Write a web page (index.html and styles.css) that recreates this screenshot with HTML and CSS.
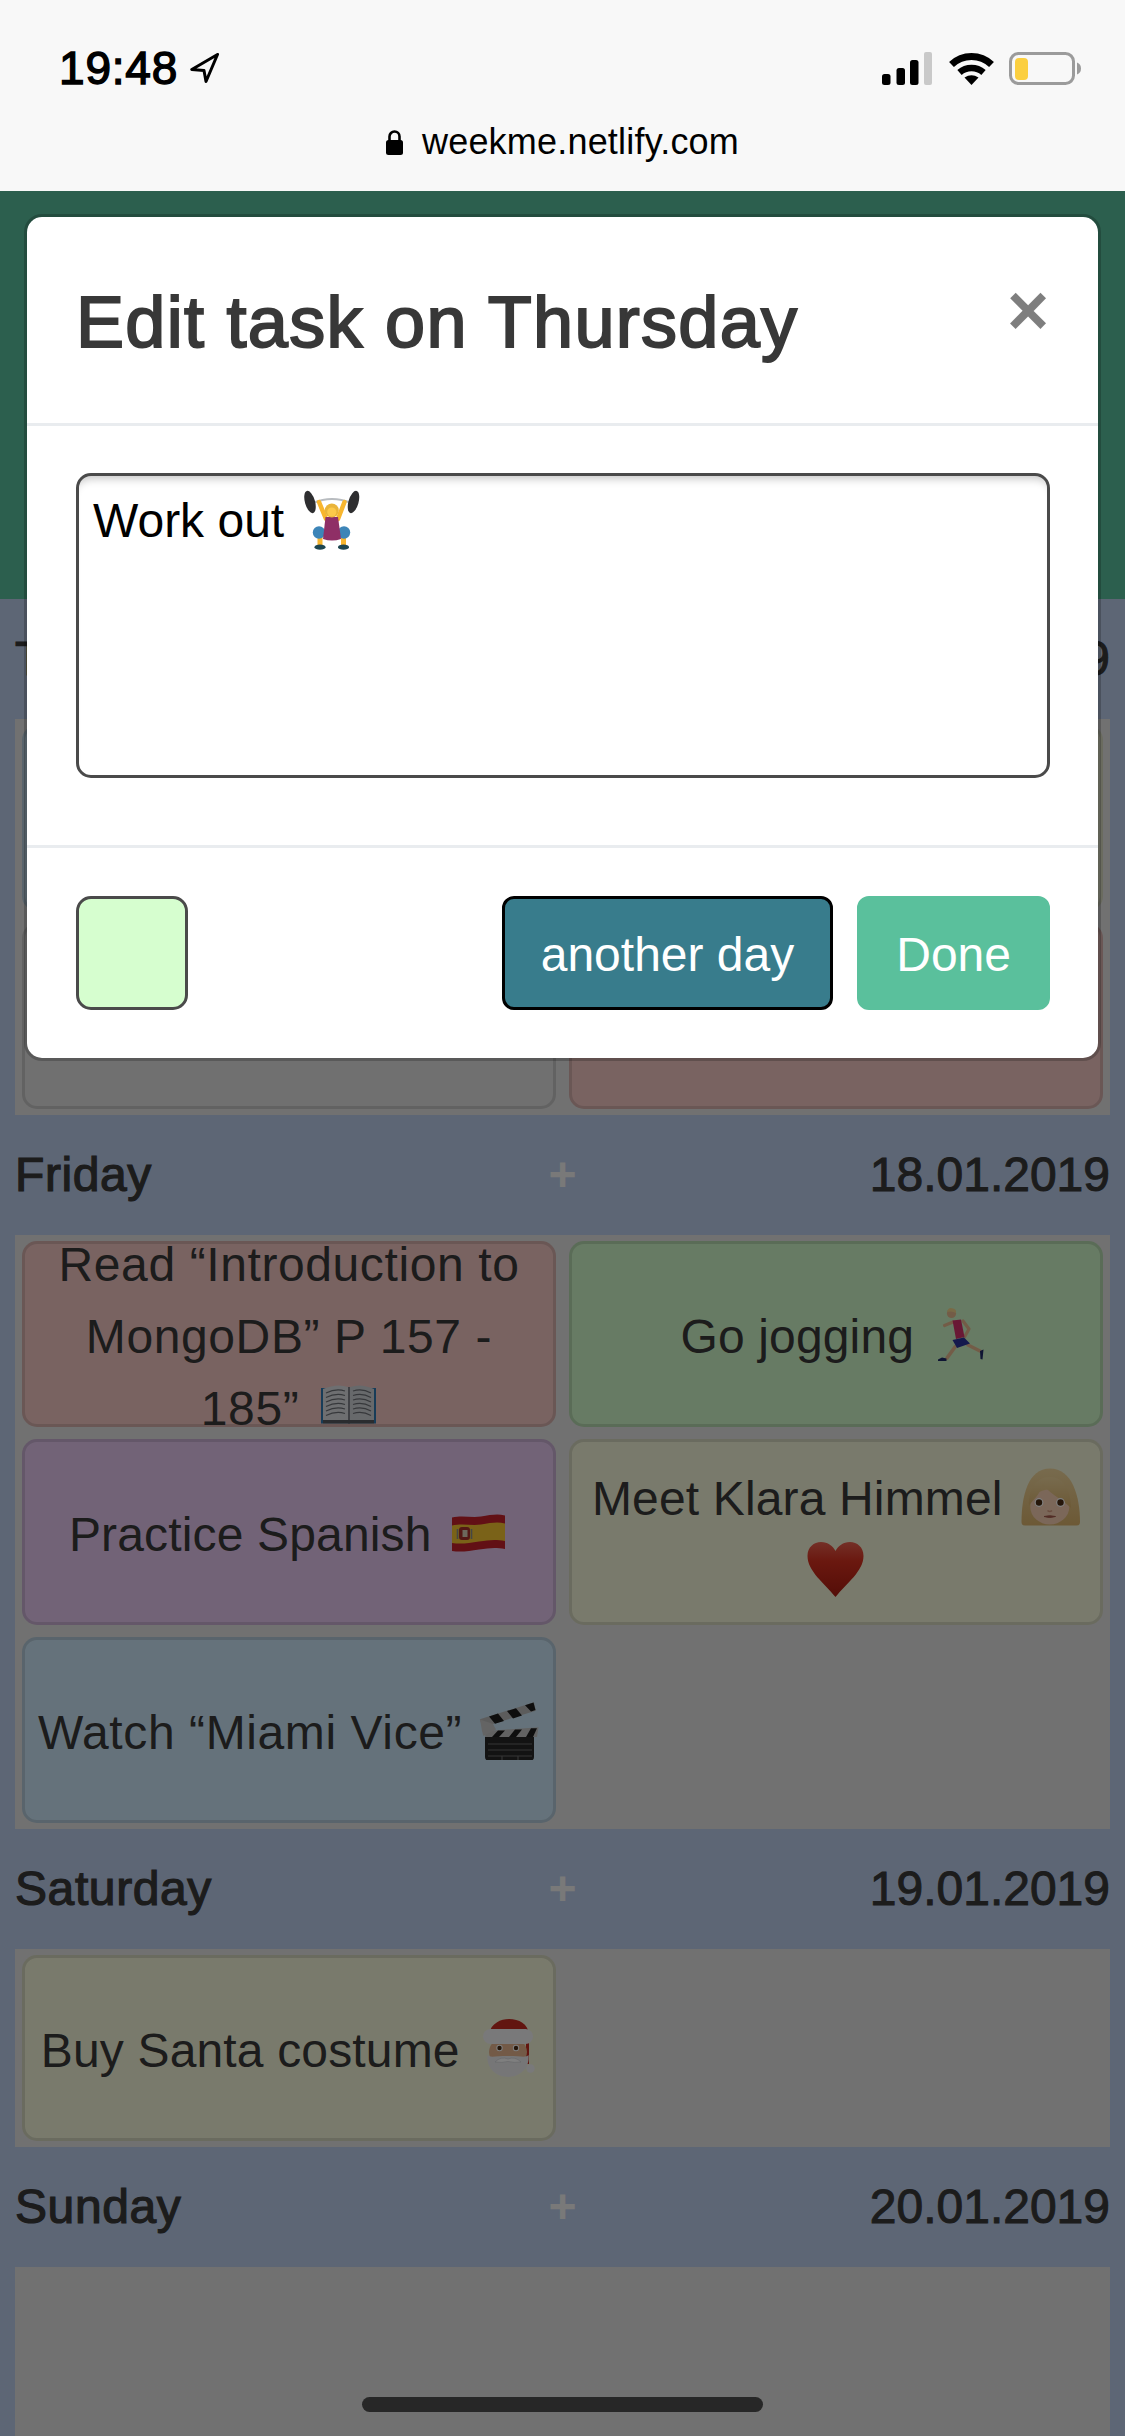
FILE: index.html
```html
<!DOCTYPE html>
<html lang="en">
<head>
  <meta charset="UTF-8">
  <meta name="viewport" content="width=device-width, initial-scale=1.0">
  <title>WeekMe</title>
  <link rel="stylesheet" href="styles.css">
</head>
<body>
  <!-- Emoji set, drawn once and reused below -->
  <svg class="sprite" aria-hidden="true">
    <defs>
      <linearGradient id="heart-fill" x1="0" y1="0" x2="0" y2="1">
        <stop offset="0" stop-color="#e8604f"/>
        <stop offset=".35" stop-color="#d5301f"/>
        <stop offset="1" stop-color="#a81b10"/>
      </linearGradient>
      <linearGradient id="hair-fill" x1="0" y1="0" x2="0" y2="1">
        <stop offset="0" stop-color="#f0d69c"/>
        <stop offset="1" stop-color="#d9b26c"/>
      </linearGradient>
    </defs>
    <symbol id="e-lifter" viewBox="0 0 64 60">
      <path d="M15 13Q34 5 53 13" fill="none" stroke="#b8bcc0" stroke-width="2"/>
      <ellipse cx="12" cy="12" rx="5" ry="11.5" transform="rotate(-16 12 12)" fill="#2e2e30"/>
      <ellipse cx="55.5" cy="12" rx="5" ry="11.5" transform="rotate(16 55.5 12)" fill="#2e2e30"/>
      <path d="M21 12L28 29M46.5 12L40 29" stroke="#f8b62e" stroke-width="4.5" stroke-linecap="round"/>
      <path d="M22 46V55M45.5 46V55" stroke="#f8b62e" stroke-width="5"/>
      <circle cx="21" cy="42.5" r="6.2" fill="#3d85b8"/>
      <circle cx="46" cy="42.5" r="6.2" fill="#3d85b8"/>
      <path d="M27.5 27H40L43 49Q34 52 25 49Z" fill="#8f2f66"/>
      <circle cx="33.8" cy="20.5" r="7" fill="#e9b43a"/>
      <circle cx="33.8" cy="22" r="4.6" fill="#fcc94a"/>
      <ellipse cx="22" cy="57.2" rx="5.5" ry="2.6" fill="#1e4650"/>
      <ellipse cx="45.5" cy="57.2" rx="5.5" ry="2.6" fill="#1e4650"/>
    </symbol>
    <symbol id="e-book" viewBox="0 0 64 60">
      <path d="M8 12H63V47.5H8Z" fill="#2f78b0"/>
      <path d="M10 13Q24 7 35 11V47.5H10Z" fill="#dcdee2"/>
      <path d="M37 11Q48 7 61 13V47.5H37Z" fill="#cfd2d6"/>
      <path d="M35 11H37V47.5H35Z" fill="#80838a"/>
      <path d="M10 44H61V47.5H10Z" fill="#55585e"/>
      <path d="M13 17Q23 12 32 15M13 21.5Q23 16.5 32 19.5M13 26Q23 21 32 24M13 30.5Q23 25.5 32 28.5M13 35Q23 30 32 33M13 39.5Q23 34.5 32 37.5M40 15Q49 12 58 17M40 19.5Q49 16.5 58 21.5M40 24Q49 21 58 26M40 28.5Q49 25.5 58 30.5M40 33Q49 30 58 35M40 37.5Q49 34.5 58 39.5" fill="none" stroke="#6d7076" stroke-width="1.2"/>
    </symbol>
    <symbol id="e-runner" viewBox="0 0 64 60">
      <path d="M25 18L16.5 21.5M35 17L41 25L36.5 33" fill="none" stroke="#e6b98e" stroke-width="3.2" stroke-linecap="round" stroke-linejoin="round"/>
      <path d="M40 41L52 47M27 43L19 54" stroke="#e6b98e" stroke-width="3.6" stroke-linecap="round"/>
      <path d="M24.5 16.5L33 15.5L36.5 33L28 35Z" fill="#d3306a"/>
      <path d="M24.5 36L36 33.5L42 39.5L29 44Z" fill="#28329a"/>
      <path d="M10 55.5L14 53.5L18.5 54.5V57H10ZM52 47L55.5 45.5L54.5 55.5L52.5 55Z" fill="#1e2a66"/>
      <circle cx="23.5" cy="9.5" r="4.6" fill="#e6b98e"/>
      <path d="M19 8Q20 3.5 24 4.2Q28.5 4.5 28 9Q24 6.5 19 8Z" fill="#f2d58c"/>
    </symbol>
    <symbol id="e-flag" viewBox="0 0 64 60">
      <path d="M7 15.5C18 13 26 16 36 14.5S52 11.5 60 13.5V47C50 45 44 46 34 47.5S16 50.5 7 49Z" fill="#c4202a"/>
      <path d="M7 23.5C18 21 26 24 36 22.5S52 19.5 60 21.5V39C50 37 44 38 34 39.5S16 42.5 7 41Z" fill="#f4c430"/>
      <rect x="14" y="25" width="11" height="13" rx="3" fill="#a6302a"/>
      <rect x="17.5" y="28" width="5" height="7" fill="#d8d0b8"/>
      <path d="M12.5 27V37M26.5 27V37" stroke="#8a8f88" stroke-width="1.6"/>
    </symbol>
    <symbol id="e-woman" viewBox="0 0 64 60">
      <path d="M5.5 56C5.5 30 12 2.5 34 2.5S64 30 64 56Q64 59.5 60.5 59.5H9Q5.5 59.5 5.5 56Z" fill="url(#hair-fill)"/>
      <ellipse cx="33.8" cy="41" rx="19.5" ry="17.5" fill="#f6cfb2"/>
      <path d="M13 40C16 34 24 30 27 17C32 28 44 31 55 42C55 24 47 11 34 11C20 11 12 24 13 40Z" fill="url(#hair-fill)"/>
      <circle cx="23" cy="36.5" r="4.4" fill="#fff"/>
      <circle cx="44.5" cy="36.5" r="4.4" fill="#fff"/>
      <circle cx="23" cy="36.5" r="3.2" fill="#4a2c14"/>
      <circle cx="44.5" cy="36.5" r="3.2" fill="#4a2c14"/>
      <path d="M31.5 44.5Q33.8 46.5 36 44.5" fill="none" stroke="#d59b80" stroke-width="1.6"/>
      <path d="M28 50.5Q33.8 52.5 39.5 50.5Q33.8 49 28 50.5Z" fill="#a55a4c" stroke="#a55a4c"/>
    </symbol>
    <symbol id="e-heart" viewBox="0 0 64 60">
      <path d="M31.5 59C20 45 3.5 33 3.5 18C3.5 9 10 4 17 4C24 4 29 8 31.5 13C34 8 39 4 46 4C53 4 59.5 9 59.5 18C59.5 33 43 45 31.5 59Z" fill="url(#heart-fill)"/>
    </symbol>
    <symbol id="e-clapper" viewBox="0 0 64 60">
      <path d="M3.8 19.3L58 2.3L59.8 10.7L6.5 27.3Z" fill="#b9b9b9"/>
      <path d="M13 16.5L22 13.6L28 21L19 23.8ZM31 11L40 8.2L46 15.6L37 18.4ZM49 5.2L57.5 2.5L59.5 10L55 11.5Z" fill="#1c1c1c"/>
      <path d="M9 37H58V57Q58 60.7 54 60.7H13Q9 60.7 9 57Z" fill="#262626"/>
      <path d="M9 37L10 31L62.5 27.3L61 37Z" fill="#c4c4c4"/>
      <path d="M16 37L22 30.6H29L23 37ZM33 37L39 29.5H46L40 37ZM50 37L55 28.3H61L57 37Z" fill="#1c1c1c"/>
      <path d="M4 19.5L17 24L20 29.5L7.5 36L6 31Z" fill="#c8c8c8"/>
      <path d="M12 44H56M12 50H56M12 56H56M26 56V60M42 56V60" stroke="#6a6a6a" stroke-width="1.2"/>
    </symbol>
    <symbol id="e-santa" viewBox="0 0 64 60">
      <path d="M16 16C18 5 28 1 36 1C46 1 55 6 56 16V46H53V24H16Z" fill="#c42a20"/>
      <ellipse cx="35" cy="34" rx="19" ry="16" fill="#e6b48e"/>
      <path d="M14.5 37C17 40 22 38 35 38S53 40 55.5 37C57 50 47 59 35 59S13 50 14.5 37Z" fill="#ecedef"/>
      <path d="M22 44Q28 38 35 41Q42 38 48 44Q41 45 35 43.5Q29 45 22 44Z" fill="#fff" stroke="#c9cbd0" stroke-width=".6"/>
      <rect x="10" y="11" width="50" height="15" rx="7.5" fill="#f2f2f4"/>
      <circle cx="26.5" cy="30" r="3.2" fill="#fff"/>
      <circle cx="43" cy="30" r="3.2" fill="#fff"/>
      <circle cx="26.5" cy="30" r="2.2" fill="#4a2c14"/>
      <circle cx="43" cy="30" r="2.2" fill="#4a2c14"/>
      <circle cx="57.5" cy="50.5" r="4.2" fill="#f2f2f4"/>
    </symbol>
  </svg>

  <div class="browser-bar">
    <div class="status-row">
      <div class="clock">
        <span>19:48</span>
        <svg class="location-icon" viewBox="0 0 29 30"><path d="M27.5 1.5L1.8 16.5L14 17.5L16 28.5Z" fill="none" stroke="#000" stroke-width="3" stroke-linejoin="round"/></svg>
      </div>
      <div class="status-icons">
        <svg class="signal-icon" viewBox="0 0 50 33">
          <rect x="0" y="22" width="8.5" height="11" rx="2.5"/>
          <rect x="14.5" y="16" width="8.5" height="17" rx="2.5"/>
          <rect x="28" y="8" width="8.5" height="25" rx="2.5"/>
          <rect x="42" y="0" width="8" height="33" rx="2" fill="#c9c9c9"/>
        </svg>
        <svg class="wifi-icon" viewBox="0 0 47 33">
          <path d="M3.5 12.5A29 29 0 0 1 43.5 12.5" fill="none" stroke="#000" stroke-width="7"/>
          <path d="M11.5 20.5A18 18 0 0 1 35.5 20.5" fill="none" stroke="#000" stroke-width="6.5"/>
          <path d="M23.5 33L16.5 25.5Q23.5 21 30.5 25.5Z"/>
        </svg>
        <svg class="battery-icon" viewBox="0 0 72 33">
          <rect x="1.5" y="1.5" width="63" height="30" rx="8" fill="none" stroke="#9b9b9b" stroke-width="3"/>
          <rect x="6" y="6" width="13" height="22" rx="4" fill="#fbcf40"/>
          <path d="M68 10.5Q72 12 72 16.5T68 22.5Z" fill="#9b9b9b"/>
        </svg>
      </div>
    </div>
    <div class="url-row">
      <svg class="lock-icon" viewBox="0 0 17 25">
        <path d="M3.5 11V6.5a5 5 0 0 1 10 0V11" fill="none" stroke="#000" stroke-width="2.6"/>
        <rect x="0" y="10" width="17" height="15" rx="2.5"/>
      </svg>
      <span>weekme.netlify.com</span>
    </div>
  </div>

  <div class="hero"></div>

  <div class="day-head">
    <span class="day-name">Thursday</span><span class="day-add">+</span><span class="day-date">17.01.2019</span>
  </div>
  <div class="day-tasks">
    <div class="task task-blue"></div>
    <div class="task task-yellow"></div>
    <div class="task task-gray"></div>
    <div class="task task-red"></div>
  </div>

  <div class="day-head">
    <span class="day-name">Friday</span><span class="day-add">+</span><span class="day-date">18.01.2019</span>
  </div>
  <div class="day-tasks">
    <div class="task task-red task-quoted"><p>Read “Introduction to MongoDB” P 157 - 185” <svg class="emoji"><use href="#e-book"/></svg></p></div>
    <div class="task task-green"><p>Go jogging <svg class="emoji"><use href="#e-runner"/></svg></p></div>
    <div class="task task-purple"><p>Practice Spanish <svg class="emoji"><use href="#e-flag"/></svg></p></div>
    <div class="task task-yellow"><p>Meet Klara Himmel <svg class="emoji"><use href="#e-woman"/></svg> <svg class="emoji"><use href="#e-heart"/></svg></p></div>
    <div class="task task-blue task-quoted"><p>Watch “Miami Vice” <svg class="emoji"><use href="#e-clapper"/></svg></p></div>
  </div>

  <div class="day-head">
    <span class="day-name">Saturday</span><span class="day-add">+</span><span class="day-date">19.01.2019</span>
  </div>
  <div class="day-tasks">
    <div class="task task-yellow"><p>Buy Santa costume <svg class="emoji"><use href="#e-santa"/></svg></p></div>
  </div>

  <div class="day-head">
    <span class="day-name">Sunday</span><span class="day-add">+</span><span class="day-date">20.01.2019</span>
  </div>
  <div class="day-tasks day-last"></div>

  <div class="backdrop"></div>

  <div class="modal">
    <div class="modal-header">
      <h5 class="modal-title">Edit task on Thursday</h5>
      <span class="modal-close">×</span>
    </div>
    <div class="modal-body">
      <div class="task-input">Work out <svg class="emoji"><use href="#e-lifter"/></svg></div>
    </div>
    <div class="modal-footer">
      <div class="color-swatch"></div>
      <button class="btn btn-day">another day</button>
      <button class="btn btn-done">Done</button>
    </div>
  </div>

  <div class="home-bar"></div>
</body>
</html>
```

FILE: styles.css
```css
/* Reset */
* {
  margin: 0;
  padding: 0;
  box-sizing: border-box;
}

html, body {
  width: 1125px;
  height: 2436px;
  overflow: hidden;
}

body {
  position: relative;
  display: flex;
  flex-direction: column;
  font-family: "Liberation Sans", Arial, sans-serif;
  font-size: 48px;
  line-height: 72px;
  color: #383838;
  background-color: #bacceb;
}

.sprite {
  position: absolute;
  width: 0;
  height: 0;
}

.emoji {
  width: 64px;
  height: 60px;
  vertical-align: -13px;
  overflow: visible;
}

/* Safari bar */
.browser-bar {
  height: 191px;
  flex-shrink: 0;
  background-color: #f8f8f8;
  color: #000;
  padding-top: 44px;
}

.status-row {
  display: flex;
  justify-content: space-between;
  align-items: center;
  height: 48px;
  padding: 0 44px 0 59px;
}

.clock {
  display: flex;
  align-items: center;
  gap: 12px;
  font-size: 46px;
  -webkit-text-stroke: 1.4px #000;
  letter-spacing: 0.8px;
}

.location-icon {
  width: 29px;
  height: 30px;
}

.status-icons {
  display: flex;
  align-items: center;
  gap: 16px;
}

.signal-icon {
  width: 50px;
  height: 33px;
}

.wifi-icon {
  width: 47px;
  height: 33px;
  margin-right: -2px;
}

.battery-icon {
  width: 72px;
  height: 33px;
}

.url-row {
  display: flex;
  justify-content: center;
  align-items: center;
  gap: 19px;
  margin-top: 26px;
  font-size: 36px;
  line-height: 48px;
  letter-spacing: 0.2px;
}

.lock-icon {
  width: 17px;
  height: 25px;
}

/* Page under the dialog */
.hero {
  height: 408px;
  flex-shrink: 0;
  background-color: #58bf9c;
}

.day-head {
  display: grid;
  grid-template-columns: 1fr auto 1fr;
  align-items: center;
  height: 120px;
  flex-shrink: 0;
  padding: 0 15px;
}

.day-name {
  -webkit-text-stroke: 1.2px #383838;
  letter-spacing: 0.6px;
}

.day-add {
  font-weight: bold;
  color: #f2f2f2;
}

.day-date {
  text-align: right;
  -webkit-text-stroke: 1px #383838;
}

.day-tasks {
  display: grid;
  grid-template-columns: 1fr 1fr;
  grid-auto-rows: 186px;
  gap: 12px 13px;
  flex-shrink: 0;
  margin: 0 15px;
  padding: 6px 7px;
  background-color: #e2e2e2;
}

.day-last {
  flex: 1;
}

.task {
  display: flex;
  align-items: center;
  justify-content: center;
  padding: 6px 10px 0;
  text-align: center;
  letter-spacing: 0.15px;
  border: 3px solid rgba(0, 0, 0, 0.12);
  border-radius: 15px;
}

.task .emoji {
  vertical-align: -11px;
}

/* Apple's curly quotes run wider than Liberation's */
.task-quoted {
  letter-spacing: 0.6px;
}

.task-red { background-color: #f2c6c3; }
.task-green { background-color: #cff6c8; }
.task-purple { background-color: #e4c7ef; }
.task-yellow { background-color: #f3f5d9; }
.task-blue { background-color: #cbe5f6; }
.task-gray { background-color: #e0e0e0; }

.backdrop {
  position: absolute;
  top: 191px;
  left: 0;
  right: 0;
  bottom: 0;
  background-color: rgba(0, 0, 0, 0.5);
}

/* Dialog */
.modal {
  position: absolute;
  top: 214px;
  left: 24px;
  width: 1077px;
  background-color: #fff;
  background-clip: padding-box;
  border: 3px solid rgba(0, 0, 0, 0.2);
  border-radius: 18px;
}

.modal-header {
  display: flex;
  justify-content: space-between;
  align-items: flex-start;
  padding: 51px 48px 47px 49px;
  border-bottom: 3px solid #e9ecef;
}

.modal-title {
  font-size: 72px;
  font-weight: normal;
  line-height: 108px;
  color: #383838;
  -webkit-text-stroke: 2px #383838;
  letter-spacing: 1.3px;
}

.modal-close {
  font-size: 72px;
  font-weight: bold;
  line-height: 72px;
  color: #000;
  opacity: 0.5;
  margin: 6px 1px 0 0;
}

.modal-body {
  padding: 47px 48px 67px 49px;
}

.task-input {
  height: 305px;
  padding: 9px 14px;
  color: #000;
  background-color: #fff;
  border: 3px solid #4a4a4a;
  border-radius: 15px;
  box-shadow: inset 0 10px 9px -7px rgba(0, 0, 0, 0.22);
}

.modal-footer {
  display: flex;
  align-items: center;
  gap: 24px;
  padding: 48px 48px 48px 49px;
  border-top: 3px solid #e9ecef;
}

.color-swatch {
  width: 112px;
  height: 114px;
  margin-right: auto;
  background-color: #d6fecf;
  border: 3px solid #4a4a4a;
  border-radius: 15px;
}

.btn {
  height: 114px;
  padding: 3px 36px 0;
  font-family: inherit;
  font-size: 48px;
  color: #fff;
  border-radius: 12px;
}

.btn-day {
  background-color: #387c8c;
  border: 3px solid #000;
}

.btn-done {
  background-color: #5ac09c;
  border: 3px solid #5ac09c;
}

.home-bar {
  position: absolute;
  left: 362px;
  bottom: 24px;
  width: 401px;
  height: 15px;
  background-color: #272727;
  border-radius: 8px;
}
```
